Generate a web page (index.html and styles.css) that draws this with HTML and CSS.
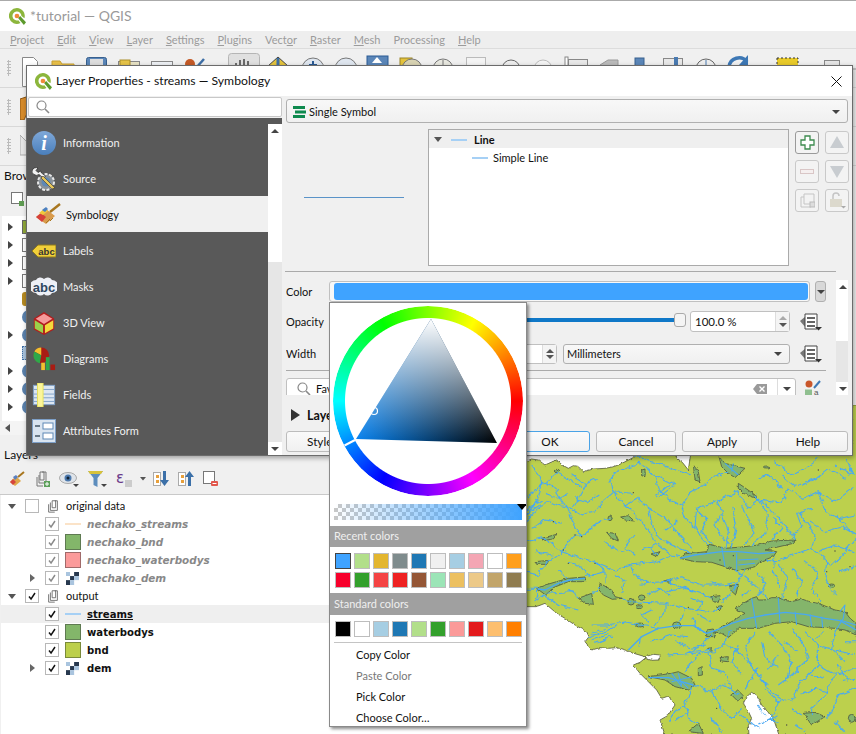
FILE: index.html
```html
<!DOCTYPE html>
<html lang="en">
<head>
<meta charset="utf-8">
<title>*tutorial — QGIS</title>
<link rel="stylesheet" href="styles.css">
</head>
<body>
<svg class="defs" width="0" height="0" aria-hidden="true">
  <symbol id="qgis" viewBox="0 0 16 16">
    <path d="M7.500 0a7.500 7.500 0 1 0 3.300 14.200L8.800 11.500A4.200 4.200 0 1 1 11.700 7.500l2.800 2.200A7.500 7.500 0 0 0 7.500 0z" fill="#8cb63c"/>
    <path d="M8.500 9.500l2-2 5.500 6-2 2.500z" fill="#5c9a2d"/>
    <circle cx="7.500" cy="7.500" r="2.200" fill="#ee8a3a"/>
  </symbol>
  <symbol id="check" viewBox="0 0 14 14"><path d="M3.500 7.500l2.400 3 4.600-7" fill="none" stroke="currentColor" stroke-width="1.700"/></symbol>
  <symbol id="group" viewBox="0 0 16 16"><path d="M5 4v9h8V2h-3M3 6v9h7M7 2h4v8H7z" fill="none" stroke="#666" stroke-width="1"/></symbol>
  <symbol id="raster" viewBox="0 0 16 16">
    <rect x="0" y="0" width="16" height="16" fill="#fff"/>
    <rect x="0" y="0" width="5" height="5" fill="#a9c4de"/><rect x="5" y="0" width="5" height="5" fill="#fff"/><rect x="10" y="0" width="6" height="5" fill="#27384e"/>
    <rect x="0" y="5" width="5" height="5" fill="#fff"/><rect x="5" y="5" width="5" height="5" fill="#27384e"/><rect x="10" y="5" width="6" height="5" fill="#a9c4de"/>
    <rect x="0" y="10" width="5" height="6" fill="#27384e"/><rect x="5" y="10" width="5" height="6" fill="#a9c4de"/>
  </symbol>
  <symbol id="dd" viewBox="0 0 24 20">
    <path d="M1 9l6-5v12z" fill="#777"/><path d="M6 2h12v15H6z" fill="#fff" stroke="#444"/>
    <path d="M8 6h8M8 10h8M8 14h8" stroke="#333" stroke-width="1.300"/><path d="M16 15h7l-3.500 3.500z" fill="#333"/>
  </symbol>
</svg>

<div class="app">
  <header class="app-title"><svg class="logo"><use href="#qgis"/></svg><span>*tutorial — QGIS</span></header>
  <nav class="menubar">
    <span><u>P</u>roject</span><span><u>E</u>dit</span><span><u>V</u>iew</span><span><u>L</u>ayer</span><span><u>S</u>ettings</span><span><u>P</u>lugins</span><span>Vect<u>o</u>r</span><span><u>R</u>aster</span><span><u>M</u>esh</span><span>Processing</span><span><u>H</u>elp</span>
  </nav>
  <div class="toolrow">
    <svg class="strip" width="856" height="38" viewBox="0 0 856 38">
      <g fill="none" stroke="#888">
        <path d="M22.500 8.500h11l4 4v25h-15z" fill="#fff"/>
        <path d="M52 12h8l2 3h12v23H52z" fill="#e8c04a" stroke="#c9a030"/>
        <rect x="86.500" y="8.500" width="20" height="30" rx="2" fill="#5b86b8" stroke="#38608e"/><rect x="90" y="10" width="13" height="7" fill="#ddd" stroke="none"/>
        <rect x="118.500" y="12.500" width="21" height="26" fill="#e8e3c5"/><rect x="120" y="11" width="10" height="9" fill="#e6c449" stroke="#a98d2a"/>
        <rect x="151.500" y="12.500" width="21" height="26" fill="#eef1f5"/>
        <path d="M157 18l8 4" stroke="#888"/>
      </g>
      <circle cx="190" cy="15" r="5" fill="#c45a27"/><path d="M196 19l8-9" stroke="#3d6ea5" stroke-width="2.500"/>
      <rect x="228.500" y="4.500" width="31" height="30" rx="3" fill="#e0e0e0" stroke="#b5b5b5"/>
      <path d="M236 20v-6M240 20v-9M244 20v-10M248 20v-8M252 22v-5" stroke="#444" stroke-width="1.500"/><path d="M234 20h20v18h-20z" fill="#fff" stroke="#444"/>
      <path d="M268 17l10-9 10 9-10 9z" fill="#e4c33c" stroke="#444"/><path d="M278 9v10" stroke="#3d6ea5" stroke-width="3"/>
      <circle cx="313" cy="20" r="11" fill="#dfe6ef" stroke="#777"/><path d="M313 12v9M309 16h8" stroke="#2a5a94" stroke-width="2"/>
      <circle cx="346" cy="20" r="11" fill="#dfe6ef" stroke="#777"/><path d="M340 18h12" stroke="#2a5a94" stroke-width="2"/>
      <rect x="367" y="7" width="21" height="12" fill="#5b86b8" stroke="#2a5a94"/><path d="M372 14l5-6 5 6" fill="#fff"/>
      <rect x="400" y="9" width="12" height="20" fill="#e4c33c" stroke="#9a8326"/><circle cx="412" cy="20" r="10" fill="#d8d3b3" stroke="#777"/>
      <circle cx="443" cy="20" r="10" fill="#e8e8e0" stroke="#777"/><path d="M443 11v10" stroke="#777"/>
      <rect x="466.500" y="8.500" width="19" height="20" fill="#f4f4f4" stroke="#bbb"/>
      <circle cx="511" cy="20" r="9" fill="#eee" stroke="#666"/>
      <circle cx="543" cy="20" r="9" fill="#f4f4f4" stroke="#bbb"/>
      <rect x="568.500" y="10.500" width="19" height="20" fill="#e8e8e8" stroke="#888"/><rect x="565" y="8" width="3" height="14" fill="#fff" stroke="#888"/>
      <path d="M600 16l8-5h10v14h-18z" fill="#bbb" stroke="#999"/>
      <rect x="635" y="9" width="9" height="20" fill="#5b86b8" stroke="#38608e"/>
      <rect x="663.500" y="9.500" width="19" height="20" fill="#e8e8e8" stroke="#888"/><rect x="674" y="8" width="4" height="20" fill="#4a7ab0"/>
      <circle cx="706" cy="20" r="10" fill="#eee" stroke="#666"/><path d="M706 11v9" stroke="#4a7ab0"/>
      <path d="M729 18a10 10 0 0 1 18-5" fill="none" stroke="#3d78b5" stroke-width="3.500"/><path d="M748 6v10h-9z" fill="#3d78b5"/>
      <rect x="777" y="9" width="21" height="20" fill="#e8ca2a" stroke="#333" stroke-dasharray="2 2"/>
      <rect x="824.500" y="11.500" width="15" height="20" fill="#e6e6e6" stroke="#888"/><rect x="838" y="16" width="5" height="14" fill="#c7a42a"/>
      <path d="M853 20h3" stroke="#999"/>
    </svg>
    <i class="grip"></i>
  </div>
  <div class="toolrow"><i class="grip"></i><svg class="tool-peek" width="12" height="26" viewBox="0 0 12 26"><path d="M0 5l6-2 4 10-6 13H0z" fill="#d68b2b" stroke="#8a5513"/></svg></div>
  <div class="toolrow"><i class="grip"></i><svg class="tool-peek" width="12" height="26" viewBox="0 0 12 26"><path d="M0 2l12 12v8H0z" fill="#e6e6e6" stroke="#aaa"/></svg></div>

  <div class="workspace">
    <aside class="docks">
      <section class="browser-dock">
        <div class="dock-title">Browser</div>
        <div class="dock-tools"><svg width="16" height="16" viewBox="0 0 16 16"><rect x="1.500" y="1.500" width="11" height="11" fill="#fff" stroke="#777"/><rect x="9" y="10" width="5" height="5" fill="#5f9b52"/></svg></div>
        <div class="browser-tree">
          <div class="brow-row"><i class="tri"></i><i class="mini m-olive"></i></div>
          <div class="brow-row"><i class="tri"></i><i class="mini m-box"></i></div>
          <div class="brow-row"><i class="tri"></i><i class="mini m-box"></i></div>
          <div class="brow-row"><i class="tri"></i><i class="mini m-box"></i></div>
          <div class="brow-row"><i class="tri-none"></i><i class="mini m-gold"></i></div>
          <div class="brow-row"><i class="tri-none"></i><i class="mini m-blue"></i></div>
          <div class="brow-row"><i class="tri"></i><i class="mini m-blue"></i></div>
          <div class="brow-row"><i class="tri-none"></i><i class="mini m-dots"></i></div>
          <div class="brow-row"><i class="tri"></i><i class="mini m-blue"></i></div>
          <div class="brow-row"><i class="tri"></i><i class="mini m-blue"></i></div>
          <div class="brow-row"><i class="tri"></i><i class="mini m-blue"></i></div>
        </div>
        <div class="h-scroll"><i class="tri-left"></i></div>
      </section>
      <section class="layers-dock">
        <div class="dock-title">Layers</div>
        <div class="layer-tools">
          <svg width="16" height="16" viewBox="0 0 16 16"><path d="M1 11l6-6 5 5-6 5z" fill="#e0a84a"/><path d="M1 11l3-3 3 3-3 3z" fill="#d6453d"/><path d="M4 6l3-2 2 2-3 3z" fill="#5a7fc0"/><path d="M9 6l6-5" stroke="#a8761f" stroke-width="2"/></svg>
          <svg width="16" height="16" viewBox="0 0 16 16"><path d="M5 4v8h7V1H8M3 6v9h6M6 1h4v8H6z" fill="none" stroke="#777"/><rect x="10" y="10" width="6" height="6" fill="#5da05a"/><path d="M13 11v4M11 13h4" stroke="#fff"/></svg>
          <svg width="20" height="16" viewBox="0 0 20 16"><ellipse cx="9" cy="7" rx="8.500" ry="5.500" fill="#dfe4ea" stroke="#aaa"/><circle cx="9" cy="7" r="3.500" fill="#4c79ad"/><circle cx="9" cy="7" r="1.500" fill="#123"/><path d="M14 13h6l-3 3z" fill="#444"/></svg>
          <svg width="19" height="17" viewBox="0 0 19 17"><path d="M0 0h15l-5.500 7v9l-4-2V7z" fill="#5d8dbd"/><path d="M0 0h15l-2 3H2z" fill="#d8c23a"/><path d="M13 13h6l-3 3z" fill="#444"/></svg>
          <svg class="expr" width="30" height="18" viewBox="0 0 30 18"><text x="0" y="13" class="eps">ε</text><rect x="9" y="10" width="7" height="7" fill="#ccc"/><path d="M24 7h6l-3 3.500z" fill="#555"/></svg>
          <svg width="16" height="16" viewBox="0 0 16 16"><rect x="0.500" y="1.500" width="7" height="13" fill="#fff" stroke="#aaa"/><rect x="3" y="4" width="3" height="3" fill="#e8a03c"/><rect x="3" y="9" width="3" height="3" fill="#e8a03c"/><path d="M10 0h3v9h3l-4.500 6L7 9h3z" fill="#3c70a8"/></svg>
          <svg width="16" height="16" viewBox="0 0 16 16"><rect x="0.500" y="1.500" width="7" height="13" fill="#fff" stroke="#aaa"/><rect x="3" y="4" width="3" height="3" fill="#e8a03c"/><rect x="3" y="9" width="3" height="3" fill="#e8a03c"/><path d="M10 15h3V6h3L11.500 0 7 6h3z" fill="#3c70a8"/></svg>
          <svg width="16" height="16" viewBox="0 0 16 16"><rect x="0.500" y="0.500" width="11" height="12" fill="#fff" stroke="#777"/><rect x="8" y="10" width="7" height="5" rx="1" fill="#e2574c"/><path d="M9.500 12.500h4" stroke="#fff"/></svg>
        </div>
        <div class="layer-tree">
          <div class="group-row"><i class="tri-down"></i><i class="cb"></i><svg class="ic16"><use href="#group"/></svg><span>original data</span></div>
          <div class="layer-row off"><i class="slot"></i><i class="cb off"><svg><use href="#check"/></svg></i><i class="line-sym peach"></i><span>nechako_streams</span></div>
          <div class="layer-row off"><i class="slot"></i><i class="cb off"><svg><use href="#check"/></svg></i><i class="fill-sym green"></i><span>nechako_bnd</span></div>
          <div class="layer-row off"><i class="slot"></i><i class="cb off"><svg><use href="#check"/></svg></i><i class="fill-sym pink"></i><span>nechako_waterbodys</span></div>
          <div class="layer-row off"><i class="tri-small"></i><i class="cb off"><svg><use href="#check"/></svg></i><svg class="ras"><use href="#raster"/></svg><span>nechako_dem</span></div>
          <div class="group-row"><i class="tri-down"></i><i class="cb"><svg><use href="#check"/></svg></i><svg class="ic16"><use href="#group"/></svg><span>output</span></div>
          <div class="layer-row current"><i class="slot"></i><i class="cb"><svg><use href="#check"/></svg></i><i class="line-sym blue"></i><span>streams</span></div>
          <div class="layer-row"><i class="slot"></i><i class="cb"><svg><use href="#check"/></svg></i><i class="fill-sym green"></i><span>waterbodys</span></div>
          <div class="layer-row"><i class="slot"></i><i class="cb"><svg><use href="#check"/></svg></i><i class="fill-sym olive"></i><span>bnd</span></div>
          <div class="layer-row"><i class="tri-small"></i><i class="cb"><svg><use href="#check"/></svg></i><svg class="ras"><use href="#raster"/></svg><span>dem</span></div>
        </div>
      </section>
    </aside>
    <main class="map-column">
      <div class="map-top"></div>
      <svg class="map" width="526" height="329" viewBox="-585 -150 1578 987">
        <defs>
          <filter id="wiggle" filterUnits="userSpaceOnUse" x="-600" y="-170" width="1620" height="1030" color-interpolation-filters="sRGB">
            <feTurbulence type="fractalNoise" baseFrequency="0.045" numOctaves="3" seed="4" result="n"/>
            <feDisplacementMap in="SourceGraphic" in2="n" scale="18" xChannelSelector="R" yChannelSelector="G"/>
          </filter>
          <filter id="rough" filterUnits="userSpaceOnUse" x="-600" y="-170" width="1620" height="1030" color-interpolation-filters="sRGB">
            <feTurbulence type="fractalNoise" baseFrequency="0.08" numOctaves="2" seed="9" result="n"/>
            <feDisplacementMap in="SourceGraphic" in2="n" scale="9" xChannelSelector="R" yChannelSelector="G"/>
          </filter>
        </defs>
        <g filter="url(#rough)">
        <path class="land" d="M-585 20L0 20 20 12 40 15 60 30 78 22 95 15 112 30 130 40 145 32 160 35 175 50 205 42 240 40 262 36 280 30 305 18 330 5 336 -2 450 -2 456 10 472 22 490 45 497 -2 980 -2 980 -150 1000 -150 1000 840 762 840 745 790 728 770 710 750 695 722 680 712 665 725 655 745 668 765 680 790 670 812 672 840 420 840 405 795 428 782 450 750 438 730 425 725 410 730 395 705 370 680 345 655 325 630 345 622 360 610 380 616 400 615 407 600 385 598 360 605 330 596 300 585 275 578 250 580 225 578 200 585 180 560 192 545 185 530 150 510 120 490 95 475 60 445 42 452 30 455 0 455 -585 455Z"/>
        <g class="lakes">
          <path d="M465 310L482 296 500 295 545 290 552 268 600 280 650 276 700 270 740 258 810 255 805 265 720 285 755 290 745 305 705 320 690 335 640 348 600 335 560 322 510 320Z"/>
          <path d="M565 530L620 500 660 475 630 460 650 448 680 430 695 425 700 435 720 435 740 428 760 428 780 436 800 440 830 432 860 442 880 445 930 465 960 470 975 490 993 505 993 540 960 525 930 520 850 515 800 500 750 505 700 520 640 520 610 548 590 535Z"/>
          <path d="M370 665L440 655 460 650 500 670 510 690 490 705 450 695 420 675Z"/>
          <path d="M35 400L60 390 130 370 180 366 182 380 130 380 85 398 62 420Z"/>
          <path d="M160 430L200 415 205 448 180 445Z"/>
          <path d="M225 385L260 405 270 425 290 430 262 433 235 420 222 405Z"/>
          <path d="M287 186L310 182 328 198 300 195Z"/>
          <path d="M245 232L270 235 280 258 260 250Z"/>
          <path d="M50 250L95 238 85 252 60 256Z"/>
          <path d="M30 320L72 316 65 328 35 328Z"/>
          <path d="M378 297L405 290 395 305Z"/>
          <path d="M416 378L438 372 436 382Z"/>
          <path d="M505 30L520 50 525 80 510 75Z"/>
          <path d="M582 5L600 25 660 40 630 68 610 55 590 35Z"/>
          <path d="M640 85L655 95 690 120 695 130 655 115 640 100Z"/>
          <path d="M350 45L360 42 360 65 350 62Z"/>
          <path d="M615 392L640 388 632 420 616 405Z"/>
          <path d="M560 425L585 422 580 442 565 440Z"/>
          <path d="M575 455L590 452 585 465Z"/>
          <path d="M520 640L532 635 532 660 520 662Z"/>
          <path d="M585 608L610 605 608 620 590 618Z"/>
          <path d="M620 720L638 705 655 722 638 738Z"/>
          <path d="M835 775L870 772 900 785 860 810Z"/>
          <path d="M490 830L520 805 535 835Z"/>
          <path d="M545 525L565 522 570 545 545 545Z"/>
          <path d="M548 580L562 578 560 592Z"/>
          <ellipse cx="318" cy="440" rx="10" ry="10"/><ellipse cx="350" cy="428" rx="10" ry="8"/><ellipse cx="342" cy="455" rx="10" ry="6"/><ellipse cx="455" cy="510" rx="12" ry="9"/><ellipse cx="345" cy="510" rx="13" ry="6"/><ellipse cx="255" cy="190" rx="6" ry="7"/><ellipse cx="980" cy="790" rx="10" ry="12"/><ellipse cx="920" cy="392" rx="9" ry="5"/><ellipse cx="96" cy="48" rx="8" ry="5"/><ellipse cx="725" cy="36" rx="10" ry="3"/>
        </g>
        </g>
        <g filter="url(#wiggle)">
        <path class="stream" d="M0 130L25 110 45 90 60 85 95 50 130 75 170 95M20 30L45 62 50 90 40 130 0 190M0 165L50 135M0 180L45 150M0 200L40 160 70 140 100 150 135 160 170 180 215 165 240 130 265 110 320 115M60 85L90 100 110 135 130 165M185 85L165 120 145 155M265 110L255 80 268 55 300 40 345 25M265 110L300 150 335 130 370 160 420 190 460 235 500 280M345 25L390 60 400 105 440 135 470 150 500 110 530 95 570 65 610 50M390 60L450 90M395 120L435 88M405 125L445 92M470 150L480 190 510 215 530 250 550 270M330 5L410 30 495 60M510 215L515 160 580 135 590 175 610 230 600 280M580 135L635 110 670 160 700 135 730 180 720 235 680 270M620 155L635 210 618 280M700 135L770 145 790 100 830 130 880 110 930 140 985 100M770 60L810 95 870 70 910 40 960 70M745 20L800 60 840 40 880 10M690 120L740 170 785 215 810 255M880 110L900 170 950 190 993 180M820 170L870 240 860 280 905 320 900 370 935 420M993 250L960 290 920 330 905 320M860 280L800 300 760 320 720 315M935 180L985 240M760 330L790 370 770 430M660 340L640 380 632 392M630 345L700 400 730 430M750 300L745 350 770 395"/>
        <path class="stream" d="M0 260L50 245 100 280 110 290 150 240 175 240 230 195 255 190M110 290L70 320 40 360 0 350M110 290L170 310 210 320 270 345 320 330 390 320 440 300 465 305M210 320L240 345 240 385M320 330L330 360 370 385 426 378 470 368 530 390 600 390 640 380M370 385L340 388M426 378L480 400 540 420 560 430M430 410L480 395 510 410M350 285L400 265 440 300M370 160L390 240 440 270 500 295M300 150L350 200 380 240 390 270M130 165L150 220 175 240M0 400L40 400 30 440 55 420 100 450 160 465M100 345L130 370M180 365L240 350M60 415L140 410 160 430M130 405L150 420M205 415L225 395M290 430L318 440 420 445 480 460 560 470 590 455M420 445L420 470 390 510M480 460L470 490 455 510M200 510L250 510 300 500 345 510 400 520M190 545L240 530 280 510M200 555L250 540M210 565L260 545M200 535L245 520M350 545L345 575M500 490L510 510 545 535M640 390L590 440"/>
        <path class="stream" d="M505 690L560 710 590 760 620 790 650 760M505 695L480 740 490 790 520 810M490 740L440 780 430 800M560 710L600 690 640 720M550 580L500 620 480 650M550 580L560 640 600 650 620 700M600 560L650 600 700 660 750 720 780 740M690 530L660 580 680 640 730 690M730 530L770 570 800 620 780 680M800 520L830 560 850 610 800 660 760 690M840 530L880 570 950 590 993 600M880 570L880 630 930 660 993 640M930 530L920 580 960 620M880 630L820 690 800 740M930 660L900 720 860 760 860 780M993 700L940 720 920 770 900 790M720 700L760 740 800 730M760 740L740 790 760 810M800 760L830 780M620 520L600 560 570 590 430 600M660 700L700 640M950 680L993 670M700 810L760 780M560 540L520 580 480 600"/>
        <path class="stream" d="M560 265L530 230 545 195 520 170M610 270L570 210 590 170M660 270L690 230 665 190 650 150M740 255L770 220 745 190M800 250L830 215 815 175 860 160M840 90L890 60M930 30L985 60 960 10M770 100L730 60 700 70M850 200L900 230 950 215 993 240M880 290L930 270 985 290M945 350L993 330M840 320L880 350 860 400 885 440M800 340L830 380 815 425M700 350L720 390 700 425M650 420L680 405M140 60L180 85 215 70M60 115L100 130 125 115M20 220L60 195 110 205M150 130L190 140 220 120M330 240L300 275 330 300M240 260L280 290 310 285M420 225L460 195M400 300L370 275M30 290L85 300M130 325L180 340 200 370M270 360L300 380 290 410M370 420L400 400 440 420M380 465L350 480 370 500M500 430L535 445 510 470M520 480L560 500M590 395L560 380M450 560L500 580 540 570M380 560L440 540 490 545M640 570L620 620 650 660M710 560L720 610 760 640M780 560L820 590M900 530L870 550M960 560L993 560M760 600L730 640M860 660L900 670M940 630L970 680M830 720L870 700 905 710M640 780L700 820M560 790L590 830M450 800L490 770M700 750L720 780M810 810L840 830M930 800L960 830"/>
        </g>
        <path class="river" d="M545 535L575 525 620 505 670 490 720 480 780 472 840 478 900 490 945 497 993 525M545 535L505 512 455 512 400 520 350 545 310 585M465 310L510 300 590 290 640 290 700 296 750 292M40 402L60 405 100 385 135 375 180 370M370 668L430 668 470 680 505 690"/>
        <path class="stream" d="M680 430L695 520M760 428L765 505M810 470L815 510M855 478L860 515M890 485L893 518M945 470L960 450 955 490 930 530M945 495L993 510M590 275L600 335M635 295L635 345M640 315L700 312M640 330L690 325M620 50L625 25M600 25L640 60M440 655L470 695M460 655L470 690M440 680L500 665M470 680L490 700"/>
        <g class="specks"><circle cx="930" cy="288" r="2"/><circle cx="975" cy="335" r="2"/><circle cx="905" cy="350" r="2"/><circle cx="210" cy="325" r="2"/><circle cx="130" cy="325" r="2"/><circle cx="150" cy="240" r="2"/><circle cx="170" cy="245" r="2"/><circle cx="85" cy="200" r="2"/><circle cx="325" cy="113" r="2"/><circle cx="585" cy="315" r="2"/><circle cx="625" cy="302" r="2"/><circle cx="490" cy="457" r="2"/><circle cx="785" cy="810" r="2"/><circle cx="575" cy="760" r="2"/><circle cx="880" cy="45" r="2"/><circle cx="115" cy="285" r="2"/></g>
      </svg>
    </main>
  </div>
</div>

<section class="dialog">
  <header class="dlg-title">
    <svg class="logo"><use href="#qgis"/></svg><span>Layer Properties - streams — Symbology</span>
    <svg class="close" width="11" height="11" viewBox="0 0 11 11"><path d="M.5.500l10 10M10.500.500l-10 10" stroke="#111"/></svg>
  </header>
  <div class="dlg-body">
    <aside class="side">
      <div class="side-search"><svg width="14" height="14" viewBox="0 0 14 14"><circle cx="5.500" cy="5.500" r="4.500" fill="none" stroke="#888" stroke-width="1.200"/><path d="M9 9l4 4" stroke="#888" stroke-width="1.600"/></svg></div>
      <div class="side-dark">
        <ul class="nav">
          <li><svg class="nav-ic" viewBox="0 0 24 24"><defs><linearGradient id="ig" x1="0" y1="0" x2="0" y2="1"><stop offset="0" stop-color="#7fa8d8"/><stop offset="1" stop-color="#4a7fbc"/></linearGradient></defs><circle cx="12" cy="12" r="12" fill="url(#ig)"/><text x="12" y="19" class="info-i">i</text></svg><span>Information</span></li>
          <li><svg class="nav-ic" viewBox="0 0 24 24"><circle cx="14" cy="15" r="8" fill="#8a9198" stroke="#e8e8e8" stroke-width="2" stroke-dasharray="3 1.500"/><circle cx="14" cy="15" r="4.500" fill="#5e88b5"/><path d="M0 3.500a4.500 4.500 0 0 1 6-2.500l-2 2.500 2 2 2.500-1.500 1 2 4 3-2 2-4.500-3.500a4.500 4.500 0 0 1-7-4.500z" fill="#f2f2f2" stroke="#222" stroke-width=".7"/><path d="M9 11l11 11 3-1-12-12z" fill="#e6c65a" stroke="#333" stroke-width=".6"/></svg><span>Source</span></li>
          <li class="active"><svg class="nav-ic" viewBox="0 0 26 24"><path d="M1 15l10-8 9 7-9 8z" fill="#d99b4c"/><path d="M1 15l5-4 5 4-4 5z" fill="#d6403a"/><path d="M4 11l6-5 3 3-5 4z" fill="#f0c93d"/><path d="M7 8l4-3 2 2-3 3z" fill="#4b80c2"/><path d="M15 10l10-8" stroke="#a8761f" stroke-width="2.500"/><path d="M11 21l4-4M15 19l3-3" stroke="#a8761f"/></svg><span>Symbology</span></li>
          <li><svg class="nav-ic" viewBox="0 0 24 24"><path d="M0 12l6-6h18v12H6z" fill="#f0cf3a" stroke="#8f7a1c"/><text x="14.500" y="15.500" class="abc">abc</text></svg><span>Labels</span></li>
          <li><svg class="nav-ic wide" viewBox="0 0 26 24"><path d="M5 5a5 5 0 0 1 8-1 5 5 0 0 1 8 1 6 6 0 0 1 0 13 5 5 0 0 1-8 1 5 5 0 0 1-8-1A6 6 0 0 1 5 5z" fill="#eef0f6"/><text x="13" y="16.500" class="abc big">abc</text></svg><span>Masks</span></li>
          <li><svg class="nav-ic" viewBox="0 0 24 26"><path d="M12 1L23 8v12l-11 6-11-6V8z" fill="#b21d1d"/><path d="M12 3l9 5.500-9 5.500-9-5.500z" fill="#f69a9a"/><path d="M2 10l9 5.500V24l-9-5z" fill="#9bd24a"/><path d="M22 10l-9 5.500V24l9-5z" fill="#f4d93c"/></svg><span>3D View</span></li>
          <li><svg class="nav-ic" viewBox="0 0 24 26"><circle cx="9" cy="9" r="8.500" fill="#a81c14"/><path d="M9 9V.5A8.500 8.500 0 0 0 1.500 5z" fill="#f2c12e"/><path d="M9 9L1.500 5a8.500 8.500 0 0 0 6 12.500z" fill="#2ea84a"/><rect x="9" y="17" width="4" height="8" fill="#f2c12e"/><rect x="14" y="11" width="4" height="14" fill="#2ea84a"/><rect x="19" y="19" width="5" height="6" fill="#a81c14"/></svg><span>Diagrams</span></li>
          <li><svg class="nav-ic" viewBox="0 0 24 26"><rect x="0.500" y="2.500" width="23" height="21" fill="#dce6f2" stroke="#7d9fc7"/><path d="M1 7h22M1 12h22M1 16h22M1 20h22" stroke="#7d9fc7"/><rect x="5" y="0" width="6" height="26" fill="#fbf59a" stroke="#e6df5a"/></svg><span>Fields</span></li>
          <li><svg class="nav-ic" viewBox="0 0 24 24"><rect x="0.500" y="0.500" width="23" height="23" fill="#d9e4f0" stroke="#7d9fc7"/><rect x="11" y="4" width="10" height="6" fill="#fff" stroke="#5e88b5"/><rect x="11" y="14" width="10" height="6" fill="#fff" stroke="#5e88b5"/><path d="M3 7h5M3 17h5" stroke="#456" stroke-width="1.500"/></svg><span>Attributes Form</span></li>
        </ul>
        <div class="nav-scroll">
          <div class="sb-btn"><i class="up"></i></div>
          <div class="sb-thumb"></div>
          <div class="sb-track"></div>
          <div class="sb-btn"><i class="down"></i></div>
        </div>
      </div>
    </aside>
    <div class="pane">
      <div class="combo top-combo">
        <svg width="13" height="14" viewBox="0 0 13 14"><path d="M0 1h12v3H0zM2 5.500h11v3H2zM0 10h12v3H0z" fill="#0e8a4e"/></svg>
        <span>Single Symbol</span><i class="caret"></i>
      </div>
      <div class="symbol-row">
        <div class="preview"><i></i></div>
        <div class="sym-tree">
          <div class="sym-line head"><i class="tri-down"></i><i class="sym-swatch"></i><b>Line</b></div>
          <div class="sym-line child"><i class="sym-swatch"></i><span>Simple Line</span></div>
        </div>
        <div class="sym-btns">
          <button class="ib"><svg width="15" height="15" viewBox="0 0 15 15"><path d="M5 1h5v4h4v5h-4v4H5v-4H1V5h4z" fill="#fff" stroke="#3d8b4e" stroke-width="1.300"/></svg></button>
          <button class="ib"><svg width="14" height="13" viewBox="0 0 14 13"><path d="M7 0l7 12H0z" fill="#c8ccd0"/></svg></button>
          <button class="ib"><svg width="14" height="6" viewBox="0 0 14 6"><rect x=".5" y=".5" width="13" height="4" fill="#f5efef" stroke="#d9c6c6"/></svg></button>
          <button class="ib"><svg width="14" height="13" viewBox="0 0 14 13"><path d="M7 13L14 1H0z" fill="#c8ccd0"/></svg></button>
          <button class="ib"><svg width="15" height="15" viewBox="0 0 15 15"><path d="M4 1h10v10H4zM1 4h3M1 4v10h10v-3" fill="none" stroke="#c5c5c5"/><rect x="10" y="9" width="5" height="5" fill="#ddd" stroke="#bbb"/></svg></button>
          <button class="ib"><svg width="17" height="17" viewBox="0 0 17 17"><path d="M4 7V4a3 3 0 0 1 6 0" fill="none" stroke="#c5c5c5" stroke-width="1.500"/><rect x="1" y="7" width="12" height="8" fill="#dcd9cd"/><path d="M12 14h5l-2.500 2.500z" fill="#aaa"/></svg></button>
        </div>
      </div>
      <div class="split-line"></div>
      <div class="form-wrap">
        <div class="form">
          <div class="f-row r-color">
            <label>Color</label>
            <div class="color-btn"><i></i></div>
            <div class="color-drop"><i class="caret"></i></div>
          </div>
          <div class="f-row r-opacity">
            <label>Opacity</label>
            <div class="slider"><i class="groove"></i><i class="handle"></i></div>
            <div class="spin w100"><span>100.0 %</span><i class="spin-btn light"></i></div>
            <svg class="dd"><use href="#dd"/></svg>
          </div>
          <div class="f-row r-width">
            <label>Width</label>
            <div class="spin w228"><span></span><i class="spin-btn"></i></div>
            <div class="combo unit"><span>Millimeters</span><i class="caret"></i></div>
            <svg class="dd"><use href="#dd"/></svg>
          </div>
          <div class="f-sep"></div>
          <div class="f-search">
            <div class="searchbox">
              <svg width="14" height="14" viewBox="0 0 14 14"><circle cx="5.500" cy="5.500" r="4.500" fill="none" stroke="#888" stroke-width="1.200"/><path d="M9 9l4 4" stroke="#888" stroke-width="1.600"/></svg>
              <span>Favorites</span>
              <svg class="clear" width="14" height="10" viewBox="0 0 14 10"><path d="M4 0h10v10H4L0 5z" fill="#9a9a9a"/><path d="M6.500 2.500l5 5M11.500 2.500l-5 5" stroke="#fff" stroke-width="1.300"/></svg>
              <i class="drop-cell"><i class="caret"></i></i>
            </div>
            <svg class="style-ic" width="16" height="16" viewBox="0 0 16 16"><circle cx="4" cy="4" r="3.500" fill="#c9572b"/><path d="M9 8l6-7" stroke="#3d78b5" stroke-width="2"/><rect x="0" y="9.500" width="7" height="6.500" fill="#8fbf8f"/><text x="9" y="14.500" class="mini-a">a</text></svg>
          </div>
        </div>
        <div class="form-scroll">
          <div class="sb-btn"><i class="up"></i></div>
          <div class="sb-thumb short"></div>
          <div class="sb-track"></div>
          <div class="sb-btn"><i class="down"></i></div>
        </div>
      </div>
      <div class="collapsed"><i class="tri-big"></i><b>Layer Rendering</b></div>
      <div class="btn-row">
        <button class="btn style-btn">Style</button>
        <span class="btn-gap"></span>
        <button class="btn default">OK</button>
        <button class="btn">Cancel</button>
        <button class="btn">Apply</button>
        <button class="btn">Help</button>
      </div>
    </div>
  </div>
</section>

<section class="popup">
  <div class="wheel-box">
    <div class="wheel"></div>
    <svg class="triangle" width="190" height="190" viewBox="333 306 190 190">
      <defs>
        <linearGradient id="tri-hue" gradientUnits="userSpaceOnUse" x1="356" y1="439" x2="497" y2="443"><stop offset="0" stop-color="#0a84f0"/><stop offset="1" stop-color="#000"/></linearGradient>
        <linearGradient id="tri-white" gradientUnits="userSpaceOnUse" x1="431" y1="319" x2="428" y2="441"><stop offset="0" stop-color="#fff"/><stop offset="1" stop-color="#fff" stop-opacity="0"/></linearGradient>
      </defs>
      <polygon points="431,319 356,439 497,443" fill="url(#tri-hue)"/>
      <polygon points="431,319 356,439 497,443" fill="url(#tri-white)"/>
      <circle cx="374" cy="411" r="3.500" fill="none" stroke="#fff" stroke-width="1.200"/>
      <path d="M344.500 445.500L355 440" stroke="#fff" stroke-width="2"/>
    </svg>
  </div>
  <div class="ramp"><i class="ramp-marker"></i></div>
  <div class="pop-head first">Recent colors</div>
  <div class="swatches two">
    <i class="sw on c-3fa3ff"></i><i class="sw c-b2df8a"></i><i class="sw c-e3b62f"></i><i class="sw c-7f8c8d"></i><i class="sw c-1f78b4"></i><i class="sw c-f0f0f0"></i><i class="sw c-a6cee3"></i><i class="sw c-f4a6b4"></i><i class="sw c-fff"></i><i class="sw c-ff9f1c"></i>
    <i class="sw c-f7002b"></i><i class="sw c-33a02c"></i><i class="sw c-f44444"></i><i class="sw c-ee2222"></i><i class="sw c-945636"></i><i class="sw c-9ce5b7"></i><i class="sw c-ecc060"></i><i class="sw c-ecc988"></i><i class="sw c-c2a56a"></i><i class="sw c-8f7c50"></i>
  </div>
  <div class="pop-head second">Standard colors</div>
  <div class="swatches">
    <i class="sw c-000"></i><i class="sw c-fff"></i><i class="sw c-a6cee3"></i><i class="sw c-1f78b4"></i><i class="sw c-b2df8a"></i><i class="sw c-33a02c"></i><i class="sw c-fb9a99"></i><i class="sw c-e31a1c"></i><i class="sw c-fdbf6f"></i><i class="sw c-ff7f00"></i>
  </div>
  <div class="pop-sep"></div>
  <ul class="pop-menu">
    <li>Copy Color</li>
    <li class="disabled">Paste Color</li>
    <li>Pick Color</li>
    <li>Choose Color…</li>
  </ul>
</section>
</body>
</html>
```

FILE: styles.css
```css
* { box-sizing: border-box; }
html, body { margin: 0; padding: 0; }
body {
  width: 856px; height: 734px; overflow: hidden; position: relative;
  font: 11px/1.2 "Lato", "Open Sans", sans-serif; color: #111; background: #fff;
}
i { display: block; font-style: normal; }
ul { list-style: none; margin: 0; padding: 0; }
.defs { position: absolute; }

/* main window */
.app { width: 856px; height: 734px; display: flex; flex-direction: column; border-top: 1px solid #aaa; background: #f0f0f0; }
.app-title { height: 30px; background: #fff; display: flex; align-items: center; padding-left: 9px; gap: 4px; font-size: 14px; color: #9a9a9a; flex: none; }
.logo { width: 17px; height: 17px; flex: none; }
.menubar { height: 18px; flex: none; display: flex; gap: 13px; align-items: center; padding-left: 10px; background: #eee; border-bottom: 1px solid #dcdcdc; color: #9b9b9b; }
.toolrow { height: 39px; flex: none; display: flex; align-items: center; gap: 5px; padding-left: 7px; border-bottom: 1px solid #d8d8d8; position: relative; }
.strip { position: absolute; left: 0; top: 0; }
.strip + .grip { position: absolute; left: 7px; top: 11px; }
.grip { width: 4px; height: 16px; background-image: radial-gradient(circle, #bbb 1px, transparent 1.200px); background-size: 3px 3px; flex: none; }
.tool-peek { margin-left: 4px; }

.workspace { flex: 1; display: flex; min-height: 0; }
.docks { width: 330px; flex: none; display: flex; flex-direction: column; }
.browser-dock { height: 280px; flex: none; display: flex; flex-direction: column; }
.dock-title { height: 20px; padding-left: 4px; display: flex; align-items: center; flex: none; font-size: 12px; }
.dock-tools { height: 30px; padding: 5px 0 0 10px; flex: none; }
.browser-tree { height: 205px; flex: none; background: #fff; margin-left: 2px; padding-top: 2px; }
.brow-row { height: 18px; display: flex; align-items: center; padding-left: 6px; }
.tri { width: 0; height: 0; border-style: solid; border-width: 4.500px 0 4.500px 5px; border-color: transparent transparent transparent #444; }
.tri-none { width: 5px; }
.mini { width: 14px; height: 14px; margin-left: 9px; flex: none; }
.m-olive { background: #8fa83a; border: 1px solid #666; }
.m-box { border: 1px solid #777; background: #fff; }
.m-gold { background: #b58a22; border-radius: 3px; }
.m-blue { background: #5b82ad; border-radius: 50%; }
.m-dots { border: 1px dotted #3d6ea5; background: #a9c4de; }
.h-scroll { height: 14px; background: #f4f4f4; display: flex; align-items: center; padding-left: 5px; flex: none; }
.tri-left { border-style: solid; border-width: 4px 5px 4px 0; border-color: transparent #555 transparent transparent; }
.layers-dock { flex: 1; display: flex; flex-direction: column; min-height: 0; }
.layers-dock .dock-title { height: 18px; }
.layer-tools { height: 31px; flex: none; display: flex; align-items: center; gap: 9px; padding-left: 9px; border-bottom: 1px solid #c9c9c9; }
.expr { margin-right: -2px; }
.eps { font: 15px "DejaVu Sans", sans-serif; fill: #6a3b8a; }
.layer-tree { flex: 1; background: #fff; margin-left: 1px; padding-top: 2px; }
.group-row, .layer-row { height: 18px; display: flex; align-items: center; }
.group-row { padding-left: 7px; }
.group-row span { margin-left: 6px; }
.tri-down { width: 0; height: 0; border-style: solid; border-width: 5px 4px 0; border-color: #555 transparent transparent; flex: none; }
.group-row .tri-down { margin-right: 9px; }
.cb { width: 14px; height: 14px; background: #fff; border: 1px solid #b8b8b8; flex: none; color: #111; }
.cb svg { width: 12px; height: 12px; display: block; }
.cb.off { color: #8a8a8a; }
.ic16 { width: 14px; height: 16px; margin-left: 7px; flex: none; }
.layer-row { padding-left: 0; font: bold 10.100px/1 "DejaVu Sans", sans-serif; }
.layer-row .slot { width: 44px; flex: none; }
.tri-small { width: 0; height: 0; margin-left: 29px; margin-right: 10px; border-style: solid; border-width: 4px 0 4px 5px; border-color: transparent transparent transparent #666; flex: none; }
.layer-row span { margin-left: 6px; padding-top: 3px; }
.layer-row.off span { padding-top: 1px; }
.layer-row.off { color: #888; font-style: italic; font-size: 10.400px; }
.layer-row.current { background: #efefef; }
.layer-row.current span { text-decoration: underline; }
.line-sym { width: 16px; height: 2px; margin-left: 6px; flex: none; }
.peach { background: #fbe3c8; }
.blue { background: #a6d0f5; }
.fill-sym { width: 16px; height: 16px; margin-left: 6px; flex: none; border: 1px solid #5f7a52; }
.green { background: #83b66a; }
.pink { background: #fb9a9a; border-color: #a06a6a; }
.olive { background: #bccf4a; border-color: #7a8a3a; }
.ras { width: 13px; height: 13px; margin-left: 7px; margin-right: 2px; flex: none; }

.map-column { flex: 1; display: flex; flex-direction: column; min-width: 0; }
.map-top { height: 239px; flex: none; background: #f0f0f0; }
.map { display: block; background: #fff; flex: none; }
.land { fill: #bcd04d; stroke: #5a5f42; stroke-width: 2.500; }
.lakes { fill: #84b56b; stroke: #4f5a42; stroke-width: 2.500; }
.stream { fill: none; stroke: #48a8f4; stroke-width: 3.200; stroke-linejoin: round; }
.river { fill: none; stroke: #48a8f4; stroke-width: 4; stroke-linejoin: round; }
.specks { fill: #444; }

/* layer properties dialog */
.dialog { position: absolute; left: 26px; top: 65px; width: 827px; height: 391px; border: 1px solid #6b6b6b; background: #f0f0f0; display: flex; flex-direction: column; box-shadow: 1px 2px 5px rgba(0,0,0,.35); }
.dlg-title { height: 30px; flex: none; background: #fff; display: flex; align-items: center; gap: 4px; padding-left: 8px; padding-right: 10px; font-size: 12.200px; }
.close { margin-left: auto; }
.dlg-body { flex: 1; display: flex; min-height: 0; }
.side { width: 255px; flex: none; display: flex; flex-direction: column; }
.side-search { height: 20px; margin: 1px 0 1px 1px; flex: none; background: #fff; border: 1px solid #c8c8c8; border-radius: 2px; padding: 2px 0 0 7px; }
.side-dark { flex: 1; min-height: 0; background: #595959; display: flex; padding-top: 7px; }
.nav { flex: 1; color: #f0f0f0; }
.nav li { height: 36px; display: flex; align-items: center; padding-left: 5px; gap: 7px; }
.nav li.active { background: #f0f0f0; color: #111; gap: 4px; margin-top: -1px; margin-bottom: 1px; }
.nav li.active span { padding-top: 2px; }
.nav-ic { width: 24px; height: 24px; flex: none; }
.nav-ic.wide { width: 26px; margin-left: -1px; margin-right: -1px; }
.active .nav-ic { width: 28px; height: 24px; margin-left: 2px; }
.info-i { font: italic bold 20px "Liberation Serif", serif; fill: #fff; text-anchor: middle; }
.abc { font: bold 9.500px "Liberation Sans", sans-serif; fill: #333; text-anchor: middle; }
.abc.big { font-size: 13px; fill: #2f4760; }
.mini-a { font: 8px "Liberation Sans", sans-serif; fill: #555; }
.nav-scroll, .form-scroll { width: 14px; flex: none; display: flex; flex-direction: column; background: #fff; }
.nav-scroll { margin-top: -1px; }
.sb-btn { height: 13px; flex: none; display: flex; align-items: center; justify-content: center; background: #fff; }
.up { border-style: solid; border-width: 0 4px 4px; border-color: transparent transparent #444; }
.down { border-style: solid; border-width: 4px 4px 0; border-color: #444 transparent transparent; }
.sb-thumb { height: 125px; flex: none; background: #fff; }
.sb-thumb.short { height: 48px; }
.sb-track { flex: 1; background: #e6e6e6; }

.pane { flex: 1; min-width: 0; display: flex; flex-direction: column; padding: 3px 4px 0; }
.combo { display: flex; align-items: center; gap: 3px; background: linear-gradient(#f8f8f8, #f0f0f0); border: 1px solid #b0b0b0; border-radius: 3px; padding-left: 6px; }
.caret { width: 0; height: 0; border-style: solid; border-width: 4px 4px 0; border-color: #444 transparent transparent; margin-left: auto; flex: none; }
.top-combo { height: 24px; flex: none; padding-top: 1px; }
.top-combo span { padding-top: 1px; }
.top-combo .caret { margin-right: 7px; }
.symbol-row { height: 137px; margin-top: 6px; display: flex; flex: none; }
.preview { width: 142px; flex: none; display: flex; align-items: center; padding-left: 18px; }
.preview i { width: 100px; height: 1px; background: #5a93c8; margin-top: -1px; }
.sym-tree { width: 361px; flex: none; background: #fff; border: 1px solid #aaa; }
.sym-line { height: 18px; display: flex; align-items: center; }
.sym-line.head { background: #efefef; padding-left: 5px; padding-top: 1px; }
.sym-line.head .tri-down { margin-right: 9px; }
.sym-line.head b { margin-left: 7px; padding-top: 1px; }
.sym-line.child { padding-left: 43px; margin-top: 1px; }
.sym-line.child span { margin-left: 5px; }
.sym-swatch { width: 16px; height: 2px; background: #a6d0f5; flex: none; }
.sym-btns { margin-left: 6px; padding-top: 2px; display: grid; grid-template-columns: 24px 24px; grid-auto-rows: 23px; gap: 6px; align-content: start; }
.ib { padding: 0; width: 24px; height: 23px; display: flex; align-items: center; justify-content: center; background: #f3f3f3; border: 1px solid #c9c9c9; border-radius: 3px; }
.ib:first-child { border-color: #9a9a9a; }
.split-line { height: 1px; margin: 5px 12px 0 -1px; background: #aaa; flex: none; }
.form-wrap { height: 123px; flex: none; display: flex; overflow: hidden; }
.form { width: 550px; flex: none; padding-top: 9px; }
.f-row { display: flex; align-items: center; }
.f-row label { width: 43px; flex: none; }
.r-color { height: 21px; }
.r-opacity { height: 21px; margin-top: 9px; }
.r-width { height: 20px; margin-top: 12px; }
.color-btn { width: 481px; height: 21px; background: #f8f8f8; border: 1px solid #c0c0c0; border-radius: 3px; padding: 1px 1px 1px 4px; }
.color-btn i { height: 100%; background: #3fa3ff; border-radius: 3px; }
.color-drop { width: 11px; height: 21px; margin-left: 5px; background: #d8d8d8; border: 1px solid #b0b0b0; border-radius: 3px; display: flex; align-items: center; justify-content: center; }
.color-drop .caret { margin: 0; }
.slider { width: 359px; height: 14px; position: relative; flex: none; margin-top: -3px; }
.groove { position: absolute; left: 0; right: 6px; top: 5px; height: 4px; background: #0f78c8; }
.handle { position: absolute; right: 2px; top: 0; width: 12px; height: 14px; background: #f4f4f4; border: 1px solid #aaa; border-radius: 3px; }
.spin { height: 21px; flex: none; background: #fff; border: 1px solid #c0c0c0; border-radius: 3px; display: flex; align-items: center; padding-left: 4px; position: relative; font-size: 11.500px; }
.w100 { width: 100px; margin-left: 2px; }
.w228 { width: 228px; height: 20px; }
.spin-btn { position: absolute; right: 0; top: 0; bottom: 0; width: 14px; border-left: 1px solid #ddd; background: #f4f4f4; }
.spin-btn::before, .spin-btn::after { content: ""; position: absolute; left: 3px; border-style: solid; border-color: transparent; }
.spin-btn::before { top: 4px; border-width: 0 4px 4px; border-bottom-color: #555; }
.spin-btn::after { bottom: 4px; border-width: 4px 4px 0; border-top-color: #555; }
.spin-btn.light::before { border-bottom-color: #aaa; }
.dd { width: 24px; height: 20px; margin-left: 9px; flex: none; }
.unit { width: 227px; height: 20px; margin-left: 6px; flex: none; padding-left: 3px; }
.unit .caret { margin-right: 7px; }
.f-sep { height: 1px; margin-top: 6px; width: 540px; background: #aaa; }
.f-search { display: flex; margin-top: 7px; }
.searchbox { width: 510px; height: 21px; background: #fff; border: 1px solid #c0c0c0; border-radius: 3px; display: flex; align-items: center; gap: 5px; padding-left: 10px; flex: none; }
.clear { margin-left: auto; margin-right: 5px; }
.drop-cell { width: 18px; height: 100%; border-left: 1px solid #ddd; display: flex; align-items: center; justify-content: center; flex: none; }
.drop-cell .caret { margin: 0; }
.style-ic { margin-left: 9px; margin-top: 2px; }
.form-scroll { width: 13px; margin-top: 8px; }
.collapsed { height: 36px; flex: none; display: flex; align-items: center; font-size: 12.500px; }
.tri-big { border-style: solid; border-width: 6px 0 6px 9px; border-color: transparent transparent transparent #333; margin: 4px 7px 0 5px; }
.collapsed b { margin-top: 4px; }
.btn-row { display: flex; gap: 6px; height: 21px; flex: none; }
.btn { width: 80px; height: 21px; padding: 1px 0 0; font: 11.800px/1.2 "Lato", sans-serif; color: #111; background: linear-gradient(#fafafa, #f0f0f0); border: 1px solid #bcbcbc; border-radius: 3px; }
.btn.default { border-color: #4aa3e6; }
.style-btn { width: 100px; text-align: left; padding-left: 20px; }
.btn-gap { flex: 1; }

/* colour popup */
.popup { position: absolute; left: 329px; top: 302px; width: 198px; height: 425px; overflow: hidden; background: #fff; border: 1px solid #8a8a8a; box-shadow: 2px 2px 3px rgba(0,0,0,.45); }
.wheel-box { position: relative; width: 190px; height: 190px; margin: 3px 0 0 3px; }
.wheel { width: 190px; height: 190px; border-radius: 50%;
  background: conic-gradient(from 90deg, #f00, #f0f, #00f, #0ff, #0f0, #ff0, #f00);
  -webkit-mask: radial-gradient(circle, transparent 82.500px, #000 83.500px);
  mask: radial-gradient(circle, transparent 82.500px, #000 83.500px); }
.triangle { position: absolute; left: 0; top: 0; }
.ramp { width: 188px; height: 16px; margin: 8px 0 0 4px; position: relative;
  background: linear-gradient(90deg, rgba(63,163,255,0), #3fa3ff), repeating-conic-gradient(#c8c8c8 0 25%, #fff 0 50%) 0 0 / 8px 8px; }
.ramp-marker { position: absolute; right: -5px; top: 0; border-style: solid; border-width: 6px 5px 0; border-color: #000 transparent transparent; }
.pop-head { height: 21px; margin-top: 6px; background: #a0a0a0; color: #efefef; padding-left: 4px; display: flex; align-items: center; }
.pop-head.first { padding-bottom: 2px; }
.pop-head.second { height: 22px; margin-top: 5px; }
.swatches { display: grid; grid-template-columns: repeat(10, 16px); gap: 3px; padding: 6px 0 0 5px; }
.sw { width: 16px; height: 16px; border: 1px solid #bdbdbd; }
.sw.on { border-color: #444; }
.c-3fa3ff { background: #3fa3ff; } .c-b2df8a { background: #b2df8a; } .c-e3b62f { background: #e3b62f; } .c-7f8c8d { background: #7f8c8d; }
.c-1f78b4 { background: #1f78b4; } .c-f0f0f0 { background: #f0f0f0; } .c-a6cee3 { background: #a6cee3; } .c-f4a6b4 { background: #f4a6b4; }
.c-fff { background: #fff; } .c-ff9f1c { background: #ff9f1c; } .c-f7002b { background: #f7002b; } .c-33a02c { background: #33a02c; }
.c-f44444 { background: #f44444; } .c-ee2222 { background: #ee2222; } .c-945636 { background: #945636; } .c-9ce5b7 { background: #9ce5b7; }
.c-ecc060 { background: #ecc060; } .c-ecc988 { background: #ecc988; } .c-c2a56a { background: #c2a56a; } .c-8f7c50 { background: #8f7c50; }
.c-000 { background: #000; } .c-fb9a99 { background: #fb9a99; } .c-e31a1c { background: #e31a1c; } .c-fdbf6f { background: #fdbf6f; } .c-ff7f00 { background: #ff7f00; }
.pop-sep { height: 1px; margin: 5px 4px 0; background: #c4c4c4; }
.pop-menu { margin-top: 1px; }
.pop-menu li { height: 21px; padding-left: 26px; display: flex; align-items: center; }
.pop-menu .disabled { color: #777; }
```
